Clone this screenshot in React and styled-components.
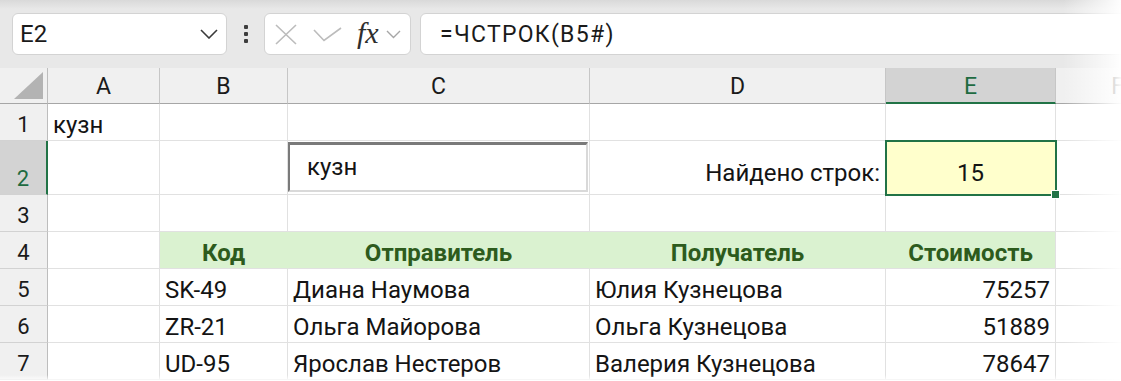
import React from "react";
import styled, { createGlobalStyle } from "styled-components";

const GREEN = "#217346";

const GlobalStyle = createGlobalStyle`
  html, body {
    margin: 0;
    padding: 0;
    background: #fff;
  }
  body {
    font-family: Roboto, "Noto Sans", sans-serif;
    color: #141414;
    overflow: hidden;
  }
`;

const columns = [
  { label: "A" },
  { label: "B" },
  { label: "C" },
  { label: "D" },
  { label: "E", active: true },
  { label: "F" },
];

const shipments = [
  { code: "SK-49", from: "Диана Наумова", to: "Юлия Кузнецова", cost: 75257 },
  { code: "ZR-21", from: "Ольга Майорова", to: "Ольга Кузнецова", cost: 51889 },
  { code: "UD-95", from: "Ярослав Нестеров", to: "Валерия Кузнецова", cost: 78647 },
];

const App = () => {
  return (
    <>
      <GlobalStyle />
      <Window>
        <Toolbar>
          <NameBox>
            <NameText>E2</NameText>
            <svg width="18" height="10" viewBox="0 0 18 10">
              <polyline points="1,1 9,9 17,1" fill="none" stroke="#3a3a3a" strokeWidth="1.6" />
            </svg>
          </NameBox>
          <Grip>
            <Dot />
            <Dot />
            <Dot />
          </Grip>
          <FxBox>
            <svg width="22" height="21" viewBox="0 0 22 21">
              <path d="M1 1 L21 20 M21 1 L1 20" stroke="#bcbcbc" strokeWidth="1.6" fill="none" />
            </svg>
            <svg width="29" height="15" viewBox="0 0 29 15">
              <polyline points="1,3 11,13.5 28,1" fill="none" stroke="#bcbcbc" strokeWidth="1.6" />
            </svg>
            <FxLabel>fx</FxLabel>
            <svg width="15" height="9" viewBox="0 0 15 9">
              <polyline points="1,1 7.5,7.5 14,1" fill="none" stroke="#a6a6a6" strokeWidth="1.4" />
            </svg>
          </FxBox>
          <FormulaBox>=ЧСТРОК(B5#)</FormulaBox>
        </Toolbar>

        <Sheet>
          <Corner>
            <svg width="30" height="28" viewBox="0 0 30 28">
              <polygon points="29,0 29,27 0,27" fill="#b3b3b3" />
            </svg>
          </Corner>
          {columns.map((c) => (
            <ColHead key={c.label} $active={c.active}>
              {c.label}
            </ColHead>
          ))}

          <RowHead>1</RowHead>
          <Cell>кузн</Cell>
          <Cell />
          <Cell />
          <Cell />
          <Cell />
          <Cell />

          <RowHead $active>2</RowHead>
          <Cell />
          <Cell />
          <Cell $top>
            <TextBox>кузн</TextBox>
          </Cell>
          <Cell $align="right" $middle>
            Найдено строк:
          </Cell>
          <Cell $align="center" $middle $selected>
            15
            <Handle />
          </Cell>
          <Cell />

          <RowHead>3</RowHead>
          <Cell />
          <Cell />
          <Cell />
          <Cell />
          <Cell />
          <Cell />

          <RowHead>4</RowHead>
          <Cell />
          <Cell $align="center" $head>Код</Cell>
          <Cell $align="center" $head>Отправитель</Cell>
          <Cell $align="center" $head>Получатель</Cell>
          <Cell $align="center" $head $edge>Стоимость</Cell>
          <Cell />

          {shipments.map((s, i) => (
            <React.Fragment key={s.code}>
              <RowHead>{i + 5}</RowHead>
              <Cell />
              <Cell>{s.code}</Cell>
              <Cell>{s.from}</Cell>
              <Cell>{s.to}</Cell>
              <Cell $align="right">{s.cost}</Cell>
              <Cell />
            </React.Fragment>
          ))}
        </Sheet>

        <FadeRight />
        <FadeBottom />
      </Window>
    </>
  );
};

export default App;

const Window = styled.div`
  position: relative;
  width: 1121px;
  height: 381px;
  overflow: hidden;
  background: #fff;
`;

const Toolbar = styled.div`
  height: 68px;
  display: flex;
  align-items: center;
  padding-left: 12px;
  background: linear-gradient(#d9d9d9 0px, #e8e8e8 9px, #e8e8e8 100%);
  box-sizing: border-box;
`;

const Box = styled.div`
  height: 42px;
  box-sizing: border-box;
  background: #fff;
  border: 1px solid #d3d3d3;
  border-radius: 6px;
  display: flex;
  align-items: center;
`;

const NameBox = styled(Box)`
  width: 215px;
  padding: 0 8px 0 7px;
  justify-content: space-between;
`;

const NameText = styled.span`
  font-size: 24px;
  color: #1a1a1a;
`;

const Grip = styled.div`
  width: 37px;
  display: flex;
  flex-direction: column;
  align-items: center;
  gap: 3px;
`;

const Dot = styled.span`
  width: 4px;
  height: 4px;
  background: #3d3d3d;
  border-radius: 1px;
`;

const FxBox = styled(Box)`
  width: 147px;
  padding-left: 10px;
  & > svg:nth-child(2) {
    margin-left: 16px;
  }
  & > svg:last-child {
    margin-left: 7px;
  }
`;

const FxLabel = styled.span`
  margin-left: 15px;
  margin-top: -2px;
  font-family: "Liberation Serif", "DejaVu Serif", serif;
  font-style: italic;
  font-size: 30px;
  line-height: 1;
  color: #2e2e2e;
`;

const FormulaBox = styled(Box)`
  flex: 1;
  margin-left: 9px;
  margin-right: -20px;
  padding-left: 19px;
  font-size: 23px;
  letter-spacing: 1.3px;
  color: #1a1a1a;
`;

const Sheet = styled.div`
  display: grid;
  grid-template-columns: 48px 112px 128px 302px 296px 170px 124px;
  grid-template-rows: 36px 37px 54px repeat(5, 37px);
`;

const Corner = styled.div`
  background: #f0f0f0;
  border-right: 1px solid #bdbdbd;
  border-bottom: 1px solid #a6a6a6;
  box-sizing: border-box;
  display: flex;
  align-items: flex-end;
  justify-content: flex-end;
  padding: 0 3px 3px 0;
`;

const ColHead = styled.div`
  box-sizing: border-box;
  display: flex;
  align-items: center;
  justify-content: center;
  padding-top: ${(p) => (p.$active ? "3px" : "2px")};
  font-size: 23px;
  background: ${(p) => (p.$active ? "#d3d3d3" : "#f0f0f0")};
  color: ${(p) => (p.$active ? "#1e6b41" : "#1a1a1a")};
  border-right: 1px solid #c6c6c6;
  border-bottom: ${(p) => (p.$active ? `2px solid ${GREEN}` : "1px solid #a6a6a6")};
`;

const RowHead = styled.div`
  box-sizing: border-box;
  display: flex;
  align-items: flex-end;
  justify-content: center;
  padding-bottom: 4px;
  font-size: 22px;
  line-height: 22px;
  background: ${(p) => (p.$active ? "#d3d3d3" : "#f0f0f0")};
  color: ${(p) => (p.$active ? "#1e6b41" : "#1a1a1a")};
  border-right: ${(p) => (p.$active ? `2px solid ${GREEN}` : "1px solid #bdbdbd")};
  border-bottom: 1px solid #d2d2d2;
`;

const Cell = styled.div`
  position: relative;
  box-sizing: border-box;
  display: flex;
  align-items: ${(p) => (p.$top ? "flex-start" : p.$middle ? "center" : "flex-end")};
  justify-content: ${(p) =>
    p.$align === "right" ? "flex-end" : p.$align === "center" ? "center" : "flex-start"};
  padding: ${(p) => (p.$top ? "1px 0 0 0" : p.$middle ? "10px 5px 0 5px" : "0 5px 3px 5px")};
  font-size: 24px;
  line-height: 24px;
  white-space: nowrap;
  font-weight: ${(p) => (p.$head ? 700 : 400)};
  color: ${(p) => (p.$head ? "#2d5b1d" : "#141414")};
  background: ${(p) => (p.$head ? "#daf2d0" : p.$selected ? "#ffffcc" : "#fff")};
  border-right: 1px solid ${(p) => (p.$head && !p.$edge ? "#daf2d0" : "#e1e1e1")};
  border-bottom: 1px solid #e1e1e1;
  ${(p) =>
    p.$selected &&
    `
    z-index: 1;
    outline: 2px solid ${GREEN};
    outline-offset: -1px;
  `}
`;

const TextBox = styled.div`
  width: 300px;
  height: 50px;
  box-sizing: border-box;
  border-style: solid;
  border-width: 3px 2px 2px 2px;
  border-color: #7a7a7a #d9d9d9 #d9d9d9 #7a7a7a;
  background: #fff;
  display: flex;
  align-items: center;
  padding: 0 0 2px 17px;
  font-size: 24px;
`;

const Handle = styled.span`
  position: absolute;
  right: -5px;
  bottom: -5px;
  width: 7px;
  height: 7px;
  background: ${GREEN};
  border: 1px solid #fff;
`;

const FadeRight = styled.div`
  position: absolute;
  top: 0;
  right: 0;
  bottom: 0;
  width: 58px;
  background: linear-gradient(to right, rgba(255, 255, 255, 0), rgba(255, 255, 255, 0.97));
  z-index: 2;
  pointer-events: none;
`;

const FadeBottom = styled.div`
  position: absolute;
  left: 0;
  right: 0;
  bottom: 0;
  height: 6px;
  background: linear-gradient(rgba(255, 255, 255, 0), rgba(255, 255, 255, 0.95));
  z-index: 2;
  pointer-events: none;
`;
